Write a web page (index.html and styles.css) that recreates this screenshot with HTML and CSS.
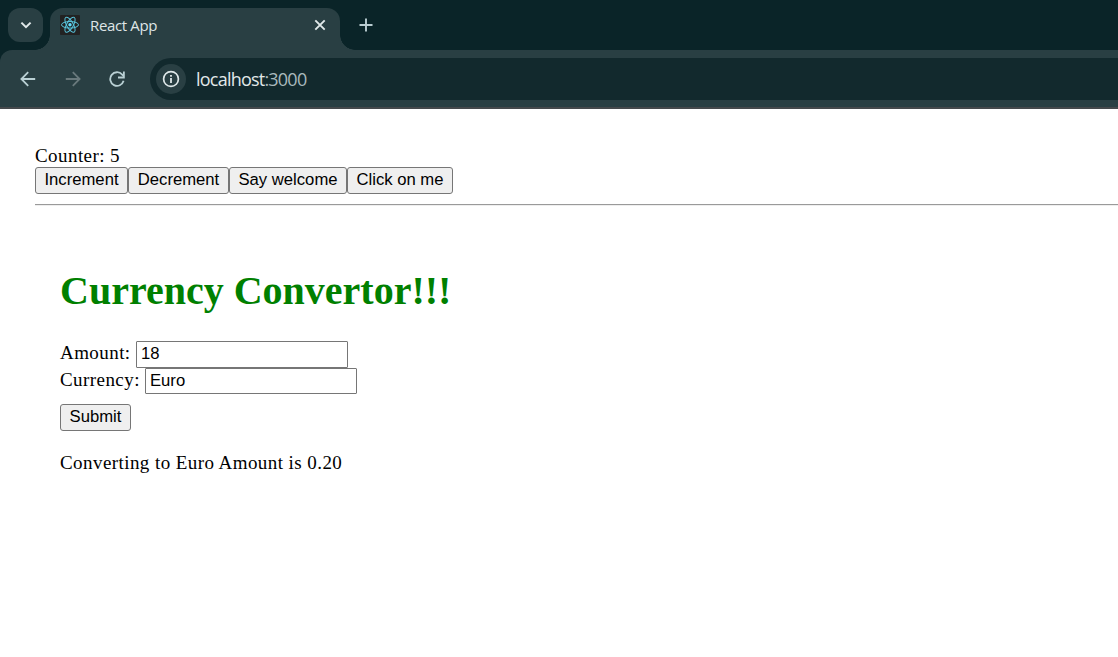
FILE: index.html
```html
<!DOCTYPE html>
<html lang="en">
<head>
<meta charset="utf-8">
<title>React App</title>
<link rel="stylesheet" href="styles.css">
</head>
<body>
<header class="browser">
  <div class="tabstrip">
    <div class="tab-search">
      <svg width="35" height="34" viewBox="0 0 35 34"><path d="M13.4 14.6l4.6 4.6 4.6-4.6" fill="none" stroke="#e1e9ea" stroke-width="2"/></svg>
    </div>
    <div class="tab">
      <svg class="favicon" width="20" height="20" viewBox="0 0 20 20">
        <rect width="20" height="20" rx="1" fill="#222"/>
        <g fill="none" stroke="#58c4dc" stroke-width="1">
          <ellipse cx="10" cy="9.8" rx="8.5" ry="3.3"/>
          <ellipse cx="10" cy="9.8" rx="8.5" ry="3.3" transform="rotate(60 10 9.8)"/>
          <ellipse cx="10" cy="9.8" rx="8.5" ry="3.3" transform="rotate(120 10 9.8)"/>
        </g>
        <circle cx="10" cy="9.8" r="1.7" fill="#61dafb"/>
      </svg>
      <span class="tab-title">React App</span>
      <svg class="tab-close" width="12" height="12" viewBox="0 0 12 12"><path d="M1.3 1.3l9.4 9.4M10.7 1.3l-9.4 9.4" stroke="#e1e9ea" stroke-width="1.9"/></svg>
    </div>
    <svg class="new-tab" width="14" height="14" viewBox="0 0 14 14"><path d="M7 .5v13M.5 7h13" stroke="#b9cdd1" stroke-width="1.9"/></svg>
  </div>
  <div class="toolbar">
    <svg class="nav" width="16" height="16" viewBox="0 0 16 16"><path d="M15.2 8H1.7M8.2 1.2L1.4 8l6.8 6.8" fill="none" stroke="#b9d0d4" stroke-width="1.8"/></svg>
    <svg class="nav" width="16" height="16" viewBox="0 0 16 16"><path d="M.8 8h13.5M7.8 1.2L14.6 8l-6.8 6.8" fill="none" stroke="#69797c" stroke-width="1.8"/></svg>
    <svg class="nav" width="16" height="16" viewBox="0 0 16 16"><path d="M14.6 9.8A6.8 6.8 0 1 1 13.2 3.6L14.4 5" fill="none" stroke="#b9d0d4" stroke-width="1.8"/><path d="M14.9 .5v6H9" fill="none" stroke="#b9d0d4" stroke-width="1.8"/></svg>
    <div class="omnibox">
      <div class="site-info">
        <svg width="18" height="18" viewBox="0 0 18 18"><circle cx="9" cy="9" r="7.4" fill="none" stroke="#dfe8e9" stroke-width="1.7"/><path d="M9 8v5M9 5v1.8" stroke="#dfe8e9" stroke-width="1.8"/></svg>
      </div>
      <span class="url">localhost<span class="port">:3000</span></span>
    </div>
  </div>
</header>
<main class="app">
  <div>Counter: 5</div>
  <div class="actions"><button class="increment">Increment</button><button class="decrement">Decrement</button><button class="welcome">Say welcome</button><button class="click">Click on me</button></div>
  <hr class="rule">
  <section class="converter">
    <h1 class="title">Currency Convertor!!!</h1>
    <form>
      <div class="field amount"><label for="amount">Amount:</label><input id="amount" value="18"></div>
      <div class="field currency"><label for="currency">Currency:</label><input id="currency" value="Euro"></div>
      <button class="submit" type="button">Submit</button>
    </form>
    <p class="result">Converting to Euro Amount is 0.20</p>
  </section>
</main>
</body>
</html>
```
FILE: styles.css
```css
* { box-sizing: border-box; }
body { margin: 0; background: #fff; overflow: hidden; }
svg { display: block; flex: none; }

.browser { font-family: "Open Sans", "Noto Sans", sans-serif; }
.tabstrip { display: flex; height: 50px; padding: 8px 0 0 8px; background: #0a2428; }
.tab-search { width: 35px; height: 34px; border-radius: 12px; background: #293f43; }
.tab { position: relative; display: flex; align-items: center; width: 290px; height: 42px; margin-left: 7px; padding: 0 14px 8px 10px; border-radius: 13px 13px 0 0; background: #293f43; }
.tab::before, .tab::after { content: ""; position: absolute; bottom: 0; width: 15px; height: 15px; }
.tab::before { left: -15px; background: radial-gradient(circle at 0 0, transparent 14.5px, #293f43 15px); }
.tab::after { right: -15px; background: radial-gradient(circle at 100% 0, transparent 14.5px, #293f43 15px); }
.tab-title { flex: 1; margin: 0 0 0 10px; font-size: 15px; line-height: 20px; letter-spacing: -0.35px; color: #dfe5e6; }
.tab-close { margin-top: 0; }
.new-tab { margin: 10px 0 0 19px; }

.toolbar { display: flex; align-items: center; height: 59px; padding: 0 0 1px 20px; border-bottom: 2px solid #45494c; border-top-left-radius: 12px; background: #293f43; box-shadow: -12px -12px 0 #0a2428; }
.nav { margin: 1px 28.5px 0 0; }
.nav + .nav + .nav { margin-right: 25px; }
.omnibox { display: flex; align-items: center; flex: 1; height: 42px; margin-top: 2px; padding-left: 6px; border-radius: 21px 0 0 21px; background: #12292d; }
.site-info { display: grid; place-items: center; width: 30px; height: 30px; border-radius: 50%; background: #293f43; }
.url { margin-left: 10px; font-size: 18px; line-height: 24px; letter-spacing: -0.78px; color: #e1e8e9; }
.port { color: #a9b9bd; }

.app { padding: 35px 0 0 35px; font: 19px/23px "Liberation Serif", "Times New Roman", serif; letter-spacing: 0.43px; color: #000; }
.app button { height: 27px; padding: 0 0 2px; border: 1px solid #767676; border-radius: 3px; background: #efefef; font: 16.667px/20px "Liberation Sans", Arial, sans-serif; letter-spacing: 0; color: #000; }
.actions { display: flex; }
.app .increment { width: 93px; }
.app .decrement { width: 101px; }
.app .welcome { width: 118px; }
.app .click { width: 106px; }
.rule { height: 2px; margin: 10px 0 0; border: 0; border-top: 1px solid #9a9a9a; border-bottom: 1px solid #eee; }
.converter { padding: 62px 0 0 25px; }
.title { margin: 0 0 27px; font-size: 40px; line-height: 46px; letter-spacing: 0; color: green; }
.field { display: flex; }
.field label { white-space: nowrap; }
.amount { height: 27px; }
.currency { height: 26px; }
.amount label { width: 76px; }
.currency label { width: 85px; }
.field input { width: 212px; height: 100%; padding: 0 4px 2px; border: 1px solid #767676; border-radius: 1px; background: #fff; font: 16.667px/20px "Liberation Sans", Arial, sans-serif; letter-spacing: 0; color: #000; }
.currency input { padding-bottom: 1px; }
.app .submit { display: block; width: 71px; margin-top: 10px; }
.result { margin: 20px 0 0; }
```
